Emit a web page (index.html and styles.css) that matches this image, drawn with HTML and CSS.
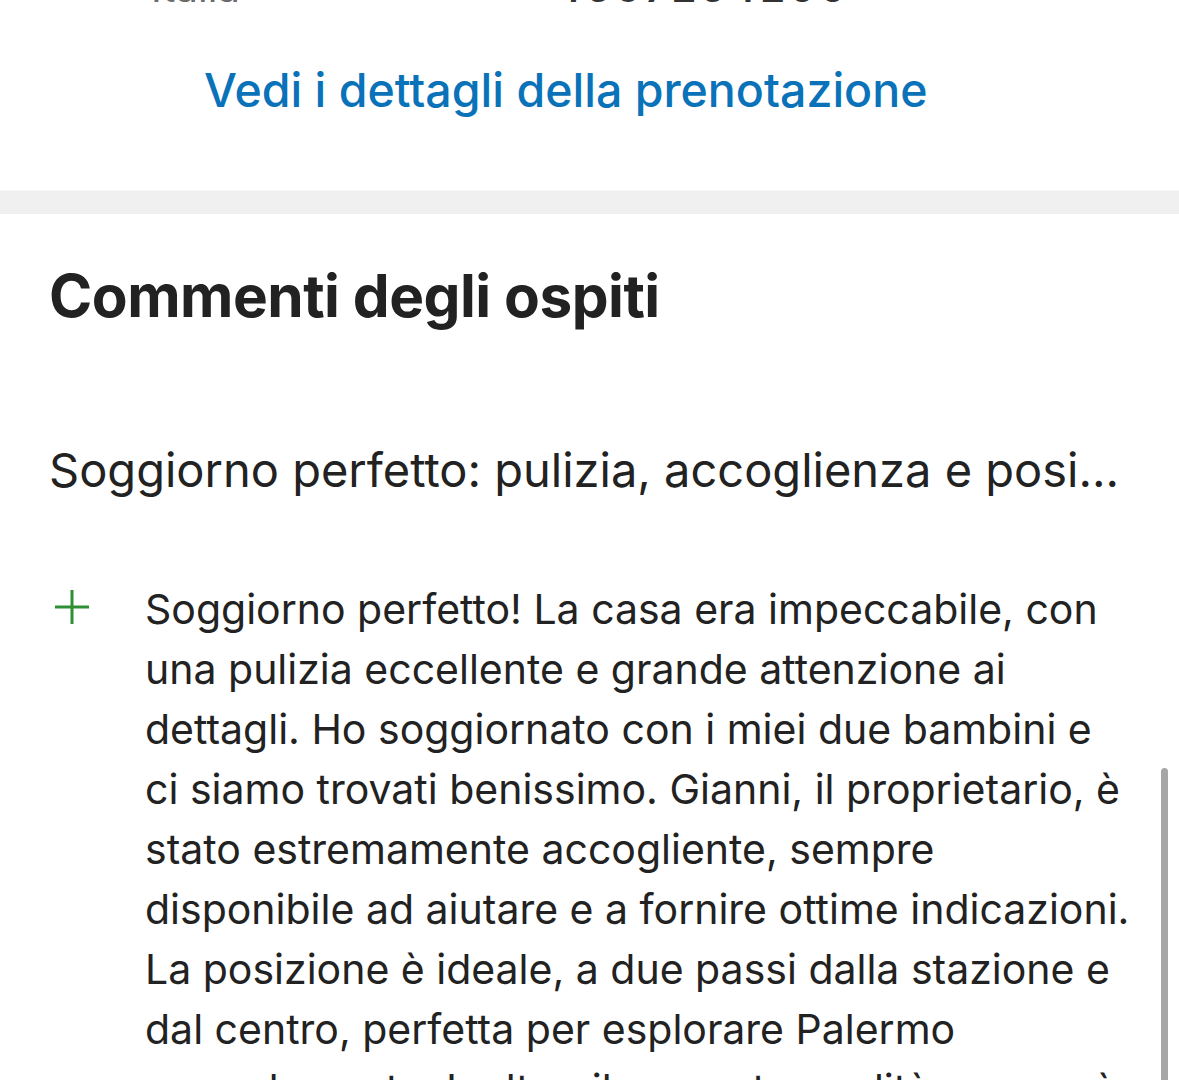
FILE: index.html
```html
<!DOCTYPE html>
<html lang="it">
  <head>
    <meta charset="UTF-8" />
    <meta name="viewport" content="width=device-width, initial-scale=1.0" />
    <title>Commenti degli ospiti</title>
    <link rel="stylesheet" href="styles.css">
  </head>
  <body>
    <div class="screen">
      <section class="booking">
        <div class="booking-row">
          <div class="country">
            <span class="flag"><i class="flag-green"></i><i class="flag-white"></i><i class="flag-red"></i></span>
            <span class="country-name">Italia</span>
          </div>
          <span class="booking-number">4567254200</span>
        </div>
        <a href="#" class="booking-link">Vedi i dettagli della prenotazione</a>
      </section>

      <div class="divider"></div>

      <section class="reviews">
        <h2>Commenti degli ospiti</h2>
        <h3 class="review-title">Soggiorno perfetto: pulizia, accoglienza e posi...</h3>

        <div class="review-item">
          <svg class="plus" width="38" height="38" viewBox="0 0 38 38">
            <path d="M19 2 V36 M2 19 H36" stroke="#2f8f34" stroke-width="3" fill="none" />
          </svg>
          <p class="review-text">
            <span>Soggiorno perfetto! La casa era impeccabile, con</span>
            <span>una pulizia eccellente e grande attenzione ai</span>
            <span>dettagli. Ho soggiornato con i miei due bambini e</span>
            <span>ci siamo trovati benissimo. Gianni, il proprietario, è</span>
            <span>stato estremamente accogliente, sempre</span>
            <span>disponibile ad aiutare e a fornire ottime indicazioni.</span>
            <span>La posizione è ideale, a due passi dalla stazione e</span>
            <span>dal centro, perfetta per esplorare Palermo</span>
            <span>comodamente. Inoltre, il rapporto qualità-prezzo è</span>
            <span>davvero ottimo. Torneremo sicuramente!</span>
          </p>
        </div>
      </section>

      <div class="scrollbar"></div>
    </div>
  </body>
</html>
```

FILE: styles.css
```css
:root {
  --text-color: #222222;
  --text-light: #6b6b6b;
  --link-color: #0a72b8;
  --band-color: #f0f0f0;
  --plus-color: #2f8f34;
}

* {
  margin: 0;
  padding: 0;
  box-sizing: border-box;
}

body {
  font-family: "Inter", "Noto Sans", sans-serif;
  background-color: white;
  color: var(--text-color);
  width: 1179px;
  height: 1080px;
  overflow: hidden;
}

.screen {
  position: relative;
  height: 1080px;
  overflow: hidden;
}

/* booking card, cut at the top */
.booking {
  margin-top: -34px;
  padding-bottom: 70px;
}

.booking-row {
  display: flex;
  align-items: center;
  height: 42px;
  padding-left: 55px;
  color: var(--text-light);
  font-size: 40px;
}

.country {
  display: flex;
  align-items: center;
  gap: 66px;
  width: 500px;
}

.flag {
  display: flex;
  width: 30px;
  height: 22px;
}

.flag i {
  flex: 1;
}

.flag-green {
  background-color: #3aa55a;
}

.flag-white {
  background-color: #f5f5f5;
}

.flag-red {
  background-color: #d7353d;
}

.booking-number {
  color: #333333;
  font-weight: 600;
  letter-spacing: 4px;
}

.booking-link {
  display: block;
  margin-top: 52px;
  padding-left: 204px;
  color: var(--link-color);
  font-size: 46.5px;
  font-weight: 500;
  line-height: 60px;
  text-decoration: none;
}

.divider {
  height: 24px;
  background-color: var(--band-color);
  border-top: 1px solid #f6f6f6;
}

.reviews {
  padding: 47px 0 0 49px;
}

.reviews h2 {
  font-size: 58.5px;
  font-weight: 700;
  line-height: 70px;
  letter-spacing: -0.5px;
}

.review-title {
  margin-top: 109px;
  font-size: 47px;
  font-weight: 400;
  line-height: 60px;
}

.review-item {
  display: flex;
  margin-top: 79px;
}

.plus {
  flex-shrink: 0;
  margin: 9px 0 0 4px;
}

.review-text {
  margin-left: 54px;
  font-size: 41px;
  line-height: 60px;
}

.review-text span {
  display: block;
  white-space: nowrap;
}

.scrollbar {
  position: absolute;
  top: 768px;
  right: 11px;
  width: 7px;
  height: 340px;
  border-radius: 4px;
  background-color: #a6a6a6;
}
```
